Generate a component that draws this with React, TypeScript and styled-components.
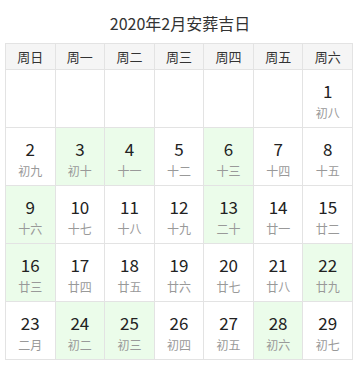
import React from "react";
import styled, { createGlobalStyle } from "styled-components";

const GlobalStyle = createGlobalStyle`
  html, body {
    margin: 0;
    padding: 0;
    background: #ffffff;
    font-family: "Noto Sans CJK SC", "Noto Sans", sans-serif;
  }
`;

const Page = styled.div`
  width: 360px;
  padding: 0 5px;
  box-sizing: border-box;
`;

const Title = styled.h1`
  margin: 0;
  height: 43px;
  padding-top: 2px;
  box-sizing: border-box;
  display: flex;
  align-items: center;
  justify-content: center;
  font-size: 16px;
  font-weight: normal;
  color: #333333;
`;

const Grid = styled.div`
  display: grid;
  grid-template-columns: repeat(7, 1fr);
  width: 348px;
  border-top: 1px solid #e3e3e3;
  border-left: 1px solid #e3e3e3;
  box-sizing: border-box;
`;

const HeadCell = styled.div`
  height: 25px;
  display: flex;
  align-items: center;
  justify-content: center;
  background: #f5f5f5;
  border-right: 1px solid #e3e3e3;
  border-bottom: 1px solid #e3e3e3;
  font-size: 13px;
  color: #333333;
`;

const DayCell = styled.div<{ $good?: boolean }>`
  height: 53px;
  padding-top: 4px;
  display: flex;
  flex-direction: column;
  align-items: center;
  justify-content: center;
  background: ${(p) => (p.$good ? "#ebfcea" : "#ffffff")};
  border-right: 1px solid #e3e3e3;
  border-bottom: 1px solid #e3e3e3;
`;

const DayNum = styled.span`
  font-size: 17px;
  line-height: 22px;
  color: #222222;
`;

const Lunar = styled.span`
  margin-top: 3px;
  font-size: 12px;
  line-height: 16px;
  color: #999999;
`;

const weekdays = ["周日", "周一", "周二", "周三", "周四", "周五", "周六"];

const lunar = [
  "初八", "初九", "初十", "十一", "十二", "十三", "十四", "十五", "十六", "十七",
  "十八", "十九", "二十", "廿一", "廿二", "廿三", "廿四", "廿五", "廿六", "廿七",
  "廿八", "廿九", "二月", "初二", "初三", "初四", "初五", "初六", "初七",
];

const goodDays = new Set([3, 4, 6, 9, 13, 16, 22, 24, 25, 28]);

// February 2020 starts on a Saturday
const leadingBlanks = 6;

export default function App() {
  const cells: React.ReactNode[] = [];
  for (let i = 0; i < leadingBlanks; i++) {
    cells.push(<DayCell key={`b${i}`} />);
  }
  lunar.forEach((l, i) => {
    const day = i + 1;
    cells.push(
      <DayCell key={day} $good={goodDays.has(day)}>
        <DayNum>{day}</DayNum>
        <Lunar>{l}</Lunar>
      </DayCell>
    );
  });

  return (
    <>
      <GlobalStyle />
      <Page>
        <Title>2020年2月安葬吉日</Title>
        <Grid>
          {weekdays.map((w) => (
            <HeadCell key={w}>{w}</HeadCell>
          ))}
          {cells}
        </Grid>
      </Page>
    </>
  );
}
